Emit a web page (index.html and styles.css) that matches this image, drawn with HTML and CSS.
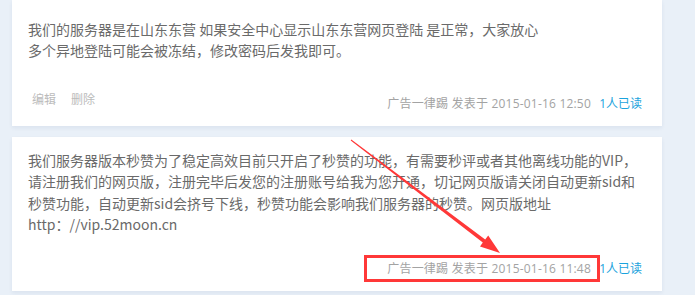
FILE: index.html
```html
<!DOCTYPE html>
<html lang="zh-CN">
  <head>
    <meta charset="UTF-8" />
    <meta name="viewport" content="width=device-width, initial-scale=1.0" />
    <title>公告</title>
    <link rel="stylesheet" href="styles.css">
  </head>
  <body>
    <div class="feed">
      <div class="card">
        <p class="card-text">
          我们的服务器是在山东东营 如果安全中心显示山东东营网页登陆 是正常，大家放心<br>
          多个异地登陆可能会被冻结，修改密码后发我即可。
        </p>
        <div class="card-foot">
          <div class="ops">
            <a href="#">编辑</a>
            <a href="#">删除</a>
          </div>
          <div class="meta">
            <span class="posted">广告一律踢 发表于 2015-01-16 12:50</span>
            <span class="reads">1人已读</span>
          </div>
        </div>
      </div>

      <div class="card">
        <p class="card-text">
          我们服务器版本秒赞为了稳定高效目前只开启了秒赞的功能，有需要秒评或者其他离线功能的VIP，<br>
          请注册我们的网页版，注册完毕后发您的注册账号给我为您开通，切记网页版请关闭自动更新sid和<br>
          秒赞功能，自动更新sid会挤号下线，秒赞功能会影响我们服务器的秒赞。网页版地址<br>
          http：//vip.52moon.cn
        </p>
        <div class="card-foot">
          <div class="meta">
            <span class="posted">广告一律踢 发表于 2015-01-16 11:48</span>
            <span class="reads">1人已读</span>
          </div>
        </div>
      </div>
    </div>

    <!-- annotation layer -->
    <svg class="markup" width="695" height="295" viewBox="0 0 695 295">
      <polygon points="350.7,140.4 351.3,139.6 485.2,239.4 488.2,235.4 500,253 480,246.6 482.8,242.6" fill="#ff3838" />
      <rect x="365.5" y="256.5" width="233" height="24" fill="none" stroke="#ff3838" stroke-width="3" />
    </svg>
  </body>
</html>
```

FILE: styles.css
```css
body {
  margin: 0;
  background: #e9f0f8;
  font-family: "Noto Sans CJK SC", "Noto Sans", sans-serif;
  position: relative;
  height: 295px;
  overflow: hidden;
}

.feed {
  width: 650px;
  padding-left: 12px;
}

.card {
  background: #fff;
  padding: 12.5px 20px 12px 16px;
  margin-bottom: 11px;
  box-shadow: 0 2px 4px rgba(30, 60, 110, 0.07);
}

.card:first-child {
  padding-top: 18.5px;
}

.card-text {
  margin: 0 0 23.5px;
  font-size: 14px;
  line-height: 21.5px;
  color: #6a6a6a;
  white-space: nowrap;
}

.card-foot {
  display: flex;
  align-items: flex-end;
}

.ops {
  display: flex;
  gap: 15px;
  margin-left: 4px;
  padding: 4px 0 5px;
  font-size: 12px;
  line-height: 20px;
}

.ops a {
  color: #bbb;
  text-decoration: none;
}

.meta {
  margin-left: auto;
  font-family: "Open Sans", "Noto Sans CJK SC", sans-serif;
  font-size: 12px;
  line-height: 20px;
  color: #a3a3a3;
}

.meta .posted {
  letter-spacing: 0.2px;
}

.meta .reads {
  margin-left: 5px;
  color: #1ba3dd;
}

.markup {
  position: absolute;
  left: 0;
  top: 0;
  pointer-events: none;
}
```
